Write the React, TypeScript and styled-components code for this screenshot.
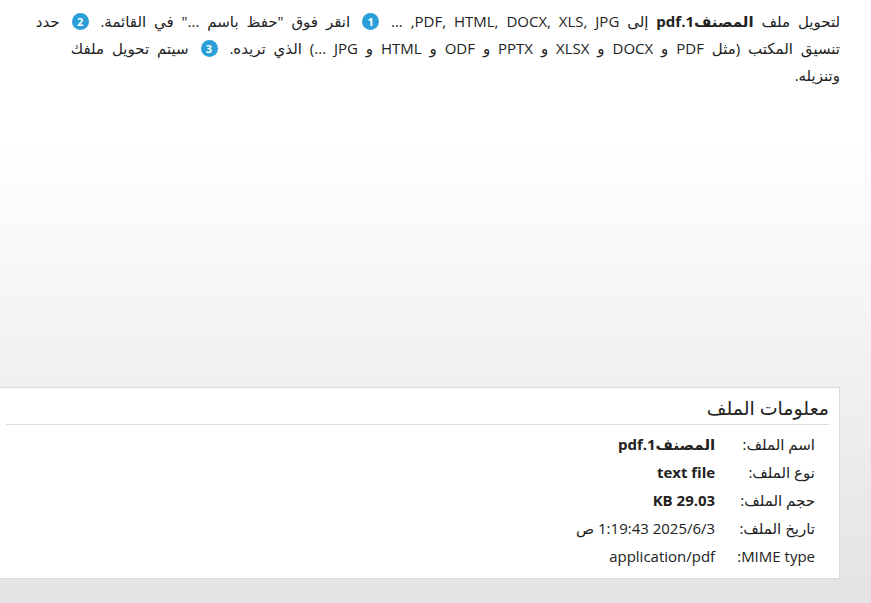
import { Fragment } from "react";
import styled, { createGlobalStyle } from "styled-components";

const GlobalStyle = createGlobalStyle`
  html, body {
    margin: 0;
    padding: 0;
  }
  body {
    min-height: 603px;
    background: linear-gradient(to bottom, #fff 0, #fff 140px, #e3e3e3 603px);
    font-family: "Segoe UI", "Open Sans", "DejaVu Sans", "Noto Sans Arabic", sans-serif;
    color: #222;
  }
`;

const Page = styled.div`
  direction: rtl;
  padding: 8px 31px 0 0;
`;

const Intro = styled.p`
  margin: 0 0 0 24px;
  font-size: 15px;
  line-height: 27px;
  word-spacing: 4px;
  text-align: right;
  b {
    font-weight: 700;
  }
`;

const Step = styled.span`
  display: inline-flex;
  align-items: center;
  justify-content: center;
  width: 17px;
  height: 17px;
  margin: 0 4px;
  border-radius: 50%;
  background: #2b9fd8;
  color: #fff;
  font-size: 11px;
  font-weight: 700;
  line-height: 1;
  vertical-align: 1px;
`;

const Card = styled.section`
  margin: 298px 0 0 -5px;
  padding: 0 10px 8px;
  background: #fff;
  border: 1px solid #dcdcdc;
`;

const CardTitle = styled.h3`
  margin: 0;
  padding: 8px 0 4px;
  font-size: 19px;
  font-weight: 500;
  line-height: 24px;
  border-bottom: 1px solid #dcdcdc;
`;

const InfoGrid = styled.dl`
  display: grid;
  grid-template-columns: auto 1fr;
  column-gap: 22px;
  margin: 5px 14px 0 0;
`;

const Label = styled.dt`
  font-size: 15px;
  line-height: 28px;
`;

const Value = styled.dd<{ $bold?: boolean }>`
  margin: 0;
  font-size: 15px;
  line-height: 28px;
  font-weight: ${(p) => (p.$bold ? 700 : 400)};
`;

const rows: { label: string; value: string; bold?: boolean }[] = [
  { label: "اسم الملف:", value: "المصنف1.pdf", bold: true },
  { label: "نوع الملف:", value: "text file", bold: true },
  { label: "حجم الملف:", value: "29.03 KB", bold: true },
  { label: "تاريخ الملف:", value: "2025/6/3 1:19:43 ص" },
  { label: "MIME type:", value: "application/pdf" },
];

export default function App() {
  return (
    <>
      <GlobalStyle />
      <Page>
        <Intro>
          لتحويل ملف <b>المصنف1.pdf</b> إلى PDF, HTML, DOCX, XLS, JPG, ...{" "}
          <Step>1</Step> انقر فوق "حفظ باسم ..." في القائمة. <Step>2</Step> حدد
          تنسيق المكتب (مثل PDF و DOCX و XLSX و PPTX و ODF و HTML و JPG ...)
          الذي تريده. <Step>3</Step> سيتم تحويل ملفك وتنزيله.
        </Intro>

        <Card>
          <CardTitle>معلومات الملف</CardTitle>
          <InfoGrid>
            {rows.map((r) => (
              <Fragment key={r.label}>
                <Label>{r.label}</Label>
                <Value $bold={r.bold}>{r.value}</Value>
              </Fragment>
            ))}
          </InfoGrid>
        </Card>
      </Page>
    </>
  );
}
